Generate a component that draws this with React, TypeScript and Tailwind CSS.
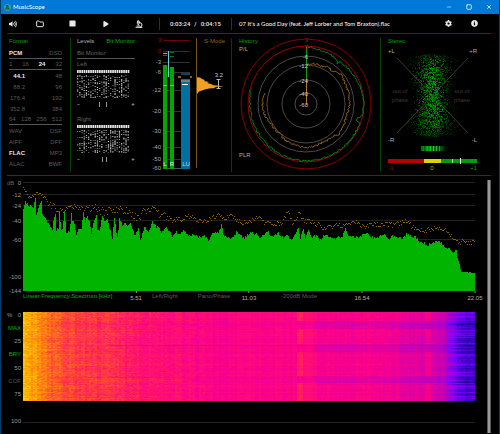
import type { ReactNode } from "react";
import { Folder, Microscope, Minus, Square, X } from "lucide-react";
import { FaCog, FaInfoCircle, FaPlay, FaStop, FaVolumeUp } from "react-icons/fa";

type Point = [number, number];

function createRandom(seed: number) {
  let state = seed;
  return () => {
    state = (state * 1664525 + 1013904223) % 4294967296;
    return state / 4294967296;
  };
}

function interpolate(points: readonly Point[], x: number) {
  if (x <= points[0][0]) return points[0][1];
  for (let i = 1; i < points.length; i++) {
    const [x1, y1] = points[i];
    if (x <= x1) {
      const [x0, y0] = points[i - 1];
      return y0 + ((y1 - y0) * (x - x0)) / (x1 - x0);
    }
  }
  return points[points.length - 1][1];
}

/* ---------- Format ---------- */

const formatRows = [
  { items: ["PCM", "DSD"], active: "PCM", line: true },
  { items: ["1", "16", "24", "32"], active: "24", line: true },
  { items: ["44.1", "48"], active: "44.1", rate: true },
  { items: ["88.2", "96"], rate: true },
  { items: ["176.4", "192"], rate: true },
  { items: ["352.8", "384"], rate: true },
  { items: ["64", "128", "256", "512"], line: true },
  { items: ["WAV", "DSF"] },
  { items: ["AIFF", "DFF"] },
  { items: ["FLAC", "MP3"], active: "FLAC" },
  { items: ["ALAC", "BWF"] },
];

function FormatPanel() {
  return (
    <section className="border-r border-[#004000] pl-0.5 pr-2">
      <h2 className="h-[10px] leading-[7px] text-[#00a000]">Format</h2>
      {formatRows.map((row) => (
        <div
          key={row.items[0]}
          className={`flex h-[11px] items-center justify-between leading-[10px] ${row.line ? "border-b border-[#555]" : ""}`}
        >
          {row.items.map((item, i) => (
            <span
              key={item}
              className={`${item === row.active ? "font-bold text-[#e8e8e8]" : "text-[#5a5a5a]"} ${row.rate && i === 0 ? "w-4 text-right" : ""}`}
            >
              {item}
            </span>
          ))}
        </div>
      ))}
    </section>
  );
}

/* ---------- Bit monitor ---------- */

const BIT_COLUMNS = 24;

function buildBits(seed: number) {
  const random = createRandom(seed);
  const bits: { x: number; y: number; opacity: number }[] = [];
  for (let col = 0; col < BIT_COLUMNS; col++) {
    const density = 0.3 + random() * 0.45;
    for (let y = 5; y < 28; y++) {
      if (random() < density) {
        bits.push({ x: col * 2.2, y, opacity: 0.25 + random() * 0.6 });
      }
    }
  }
  return bits;
}

const channels = [
  { name: "Left", bits: buildBits(11), ticks: [22, 29] },
  { name: "Right", bits: buildBits(47), ticks: [25, 29] },
];

function BitMonitorPanel() {
  return (
    <section className="pl-1.5 pr-[11px]">
      <div className="flex h-[10px] items-start justify-between whitespace-nowrap leading-[7px]">
        <button className="text-[#b0b0b0]">Levels</button>
        <button className="text-[#00b000]">Bit Monitor</button>
      </div>
      <div className="h-[11px] border-b border-[#555] leading-[10px] text-[#666]">Bit Monitor</div>
      {channels.map((channel) => (
        <div key={channel.name} className="h-[55px]">
          <div className="h-[11px] leading-[11px] text-[#666]">{channel.name}</div>
          <svg viewBox="0 0 58 39" className="h-[39px] w-full" preserveAspectRatio="none">
            {Array.from({ length: BIT_COLUMNS }, (_, i) => (
              <rect key={i} x={i * 2.2} y="0" width="1.7" height="3" fill="#e4e4e4" />
            ))}
            {channel.bits.map((bit, i) => (
              <rect key={i} x={bit.x} y={bit.y} width="1.3" height="1" fill="#e0e0e0" opacity={bit.opacity} />
            ))}
            <path d="M0.500 34.500h2M54.500 34.500h3M56 33v3" stroke="#999" strokeWidth="0.7" />
            {channel.ticks.map((x) => (
              <rect key={x} x={x} y="32" width="0.8" height="5" fill="#bbb" />
            ))}
          </svg>
        </div>
      ))}
    </section>
  );
}

/* ---------- Level meters ---------- */

const meterScale = [
  { label: "3", y: 40, color: "#700000" },
  { label: "0", y: 51, color: "#a00000" },
  { label: "-3", y: 62, color: "#333" },
  { label: "-6", y: 72, color: "#333" },
  { label: "-12", y: 90, color: "#333" },
  { label: "-20", y: 111, color: "#333" },
  { label: "-30", y: 131, color: "#333" },
  { label: "-40", y: 147, color: "#333" },
  { label: "-50", y: 159, color: "#333" },
  { label: "-60", y: 168, color: "#555" },
];

function MeterPanel() {
  return (
    <section className="flex border-r border-[#004000]">
      <svg viewBox="146 38 46 134" className="h-[134px] w-[46px] shrink-0" role="img" aria-label="Level meters">
        {meterScale.map(({ label, y, color }) => (
          <g key={label}>
            <rect x="163" y={y} width="27" height="1" fill={color} />
            <text x="161" y={y + 2} textAnchor="end" fill={y < 60 ? "#b00000" : "#aaa"}>
              {label}
            </text>
          </g>
        ))}
        <g shapeRendering="crispEdges">
          <rect x="163" y="65" width="4" height="104" fill="#00a800" />
          <rect x="170" y="67" width="4" height="102" fill="#00a800" />
          <path d="M163 85h4v1h-4zM170 85h4v1h-4zM163 53h4v1h-4z" fill="#00ff30" />
          <path d="M163 55h4v1h-4zM170 52h4v1h-4zM170 56h4v1h-4z" fill="#007a20" />
          <rect x="168" y="51" width="1" height="26" fill="#70c8e0" />
          <rect x="181" y="79" width="9" height="90" fill="#0070a0" />
          <rect x="181" y="73" width="9" height="2" fill="#004868" />
          <rect x="181" y="80" width="9" height="2" fill="#7a8060" />
          <rect x="182" y="84" width="6" height="1" fill="#fff" />
          <path d="M178 76h3v2h-3zM190 76h3v2h-3z" fill="#8a6020" />
        </g>
        <text x="165" y="166" textAnchor="middle" fill="#d8f4d8">L</text>
        <text x="172" y="166" textAnchor="middle" fill="#d8f4d8">R</text>
        <text x="186" y="166" textAnchor="middle" fill="#b8dcec">LU</text>
      </svg>
      <div className="mb-1 ml-1 flex-1 border-l border-[#7a5010]">
        <button className="ml-[7px] block h-[7px] whitespace-nowrap leading-[5px] text-[#9a6418]">S-Mode</button>
        <svg viewBox="197 45 34 54" className="h-[54px] w-[34px]" role="img" aria-label="Loudness distribution">
          <path
            d="M196 77L200 77.500 202 79 205 80 204 81 209 82 207 83 213 84.500 211 85 217 85.500 224 86.500 214 87 216 88 209 88.500 205 89.500 202 90.500 199 91.500 197 94z"
            fill="#f0a020"
          />
          <path d="M216.500 79.500h4M216.500 88.500h4M218.500 79.500v9" stroke="#bbb" strokeWidth="1" fill="none" />
          <text x="219" y="77" textAnchor="middle" fill="#ccc">3.2</text>
        </svg>
      </div>
    </section>
  );
}

/* ---------- History ---------- */

const CENTER: Point = [306, 104];

const historyRings = [
  { label: "3", radius: 65, color: "#8a0000" },
  { label: "0", radius: 58, color: "#a00000" },
  { label: "-6", radius: 48, color: "#4a4a4a" },
  { label: "-12", radius: 39, color: "#4a4a4a" },
  { label: "-24", radius: 24, color: "#4a4a4a" },
  { label: "-40", radius: 11, color: "#4a4a4a" },
];

// [angle in degrees clockwise from the top, radius]
const peakTrace: Point[] = [
  [0, 57], [12, 56], [28, 55], [36, 53], [37, 50], [39, 54], [50, 55], [56, 55], [70, 57],
  [90, 58], [103, 57], [105, 54], [108, 53], [109, 57], [140, 57], [180, 57], [225, 56], [270, 56], [286, 57],
];
const loudnessTrace: Point[] = [
  [0, 39], [10, 41], [22, 41], [30, 43], [38, 42], [50, 46], [62, 44], [80, 44], [95, 43],
  [106, 42], [120, 43], [133, 45], [140, 42], [160, 42], [182, 44], [192, 42], [208, 42], [220, 40],
  [238, 40], [250, 42], [268, 44], [286, 43],
];

function tracePath(points: Point[], jitter: number, seed: number) {
  const random = createRandom(seed);
  let d = "";
  for (let angle = 0; angle <= 286; angle += 1.5) {
    const r = interpolate(points, angle) + (random() - 0.5) * jitter;
    const rad = (angle * Math.PI) / 180;
    const x = CENTER[0] + r * Math.sin(rad);
    const y = CENTER[1] - r * Math.cos(rad);
    d += `${d ? "L" : "M"}${x.toFixed(1)} ${y.toFixed(1)}`;
  }
  return d;
}

const peakPath = tracePath(peakTrace, 1.8, 5);
const loudnessPath = tracePath(loudnessTrace, 2, 9);

function HistoryPanel() {
  return (
    <section className="border-r border-[#004000]">
      <svg viewBox="232 38 148 134" className="h-[134px] w-full" role="img" aria-label="History">
        {historyRings.map(({ label, radius, color }) => (
          <circle key={label} cx={CENTER[0]} cy={CENTER[1]} r={radius} fill="none" stroke={color} strokeWidth="1" />
        ))}
        <path d={peakPath} fill="none" stroke="#008c14" strokeWidth="0.9" />
        <path d={loudnessPath} fill="none" stroke="#a06c18" strokeWidth="0.9" />
        <rect x="306" y="47" width="1" height="32" fill="#00a010" />
        <rect x="306" y="79" width="1" height="26" fill="#b07820" />
        {historyRings.map(({ label, radius }) => (
          <text
            key={label}
            x="308"
            y={CENTER[1] - radius + 3}
            textAnchor="end"
            fill={radius > 50 ? "#d00000" : "#ccc"}
          >
            {label}
          </text>
        ))}
        <text x="308" y="107" textAnchor="end" fill="#ccc">-60</text>
        <text x="239" y="43" fill="#00a000">History</text>
        <text x="239" y="51" fill="#aaa">P/L</text>
        <text x="239" y="157" fill="#aaa">PLR</text>
      </svg>
    </section>
  );
}

/* ---------- Stereo ---------- */

function buildScatter() {
  const random = createRandom(77);
  const dots: { x: number; y: number; opacity: number }[] = [];
  for (let i = 0; i < 2400; i++) {
    const spread = (random() + random() + random()) / 1.5 - 1;
    const v = random() * 2 - 1;
    const width = 21 + 13 * Math.abs(v);
    const x = 432 + spread * width;
    const y = 95 + v * 41 * Math.sqrt(1 - (spread * spread) / 3);
    const edge = 1 - Math.abs(spread) * 0.7 - Math.max(0, Math.abs(v) - 0.65) * 1.6;
    dots.push({ x: Math.round(x), y: Math.round(y), opacity: Math.max(0.15, edge * (0.15 + random() * 0.5)) });
  }
  return dots;
}

const scatter = buildScatter();
const correlationBars = [0.5, 0.9, 0.4, 1, 0.8, 1, 0.9, 0.6, 1, 0.7, 0.9, 0.4, 0.8, 0.5, 0.3, 0.2];

function StereoPanel() {
  return (
    <section>
      <svg viewBox="381 38 110 134" className="h-[134px] w-full" role="img" aria-label="Stereo">
        <g shapeRendering="crispEdges" fill="#00c400">
          {scatter.map((dot, i) => (
            <rect key={i} x={dot.x} y={dot.y} width="1" height="1" opacity={dot.opacity} />
          ))}
        </g>
        <path d="M397 58L468 133M468 58L397 133" stroke="#484848" strokeWidth="0.8" />
        <text x="388" y="43" fill="#00a000">Stereo</text>
        <g fill="#b0b0b0">
          <text x="388" y="53">+L</text>
          <text x="477" y="53" textAnchor="end">+R</text>
          <text x="388" y="142">-R</text>
          <text x="477" y="142" textAnchor="end">-L</text>
        </g>
        <g fill="#3a3a3a" textAnchor="middle">
          <text x="400" y="93">out of</text>
          <text x="400" y="102">phase</text>
          <text x="462" y="93">out of</text>
          <text x="462" y="102">phase</text>
        </g>
        {correlationBars.map((opacity, i) => (
          <rect key={i} x={421 + i * 1.5} y="146" width="1.2" height="5" fill="#00e020" opacity={opacity} />
        ))}
        <g shapeRendering="crispEdges">
          <rect x="388" y="159" width="36" height="4" fill="#b40000" />
          <rect x="424" y="159" width="17" height="4" fill="#dcd400" />
          <rect x="441" y="159" width="36" height="4" fill="#009c10" />
          <rect x="452" y="159" width="1" height="4" fill="#b0e8b0" />
          <rect x="460" y="158" width="1" height="6" fill="#fff" />
        </g>
        <text x="388" y="170" fill="#b00000">-1</text>
        <text x="432" y="170" textAnchor="middle" fill="#b0b000">0</text>
        <text x="477" y="170" textAnchor="end" fill="#00a000">+1</text>
      </svg>
    </section>
  );
}

/* ---------- Spectrum ---------- */

const PLOT_WIDTH = 452;
const PLOT_HEIGHT = 112;

const spectrumLevels: Point[] = [
  [0, 31], [2, 23], [6, 27], [10, 28], [12, 19], [13, 36], [15, 29], [18, 23], [19, 34], [22, 38], [24, 44], [26, 46],
  [29, 51], [30, 43], [32, 35], [33, 51], [35, 49], [36, 34], [38, 51], [39, 51], [41, 34], [43, 53], [46, 53], [48, 34],
  [49, 41], [51, 46], [53, 55], [55, 49], [58, 51], [60, 34], [62, 43], [64, 37], [66, 43], [68, 56], [70, 44], [73, 36],
  [74, 51], [76, 53], [79, 37], [81, 43], [83, 41], [84, 39], [86, 49], [89, 59], [91, 39], [94, 59], [96, 40], [99, 46],
  [102, 43], [104, 47], [107, 43], [109, 51], [112, 56], [115, 50], [117, 61], [121, 48], [125, 53], [129, 43], [133, 48],
  [136, 49], [138, 54], [143, 47], [146, 53], [149, 58], [152, 53], [157, 54], [161, 51], [165, 56], [169, 56], [173, 56],
  [177, 59], [181, 56], [185, 62], [189, 53], [195, 54], [198, 46], [200, 55], [205, 59], [209, 58], [213, 53], [217, 56],
  [221, 59], [227, 54], [234, 56], [237, 59], [244, 52], [248, 58], [255, 54], [260, 59], [263, 55], [268, 62], [272, 55],
  [275, 49], [277, 59], [280, 49], [282, 59], [285, 52], [288, 59], [293, 56], [296, 62], [300, 57], [305, 57], [310, 61],
  [314, 58], [319, 58], [322, 49], [325, 56], [330, 58], [334, 59], [339, 56], [344, 53], [347, 58], [353, 59], [357, 56],
  [362, 55], [365, 61], [369, 56], [374, 59], [379, 59], [384, 55], [389, 58], [393, 59], [396, 64], [400, 64], [404, 66],
  [409, 63], [417, 63], [422, 68], [427, 71], [430, 74], [433, 71], [434, 78], [438, 93], [444, 93], [452, 94],
];

const maximumLevels: Point[] = [
  [1, 9], [5, 17], [9, 17], [13, 13], [19, 16], [25, 23], [34, 29], [44, 29], [51, 26], [59, 31], [72, 27], [80, 33],
  [94, 29], [104, 32], [110, 38], [117, 37], [120, 29], [124, 33], [131, 29], [137, 36], [147, 39], [152, 41], [160, 39],
  [165, 36], [174, 41], [179, 43], [187, 39], [194, 36], [202, 40], [208, 34], [212, 41], [220, 43], [227, 42], [235, 37],
  [239, 42], [250, 45], [260, 42], [264, 33], [266, 36], [270, 46], [276, 33], [280, 41], [290, 43], [302, 49],
  [314, 46], [324, 46], [334, 42], [340, 48], [350, 45], [364, 45], [370, 46], [382, 41], [390, 48], [400, 52],
  [410, 49], [420, 49], [427, 56], [434, 62], [442, 63], [452, 63],
];

function buildSpectrum() {
  const random = createRandom(31);
  let area = `M0 ${PLOT_HEIGHT}`;
  let dots = "";
  for (let x = 0; x < PLOT_WIDTH; x++) {
    const jitter = x > 435 ? 1 : 3;
    const y = Math.round(interpolate(spectrumLevels, x) + (random() - 0.5) * jitter);
    area += `V${y}H${x + 1}`;
    const spread = x < 25 ? 3 : x < 150 ? 8 : 5;
    const top = Math.round(interpolate(maximumLevels, x) + (random() - 0.5) * spread);
    dots += `M${x} ${top}h1v1h-1z`;
  }
  return { area: `${area}V${PLOT_HEIGHT}z`, dots };
}

const spectrum = buildSpectrum();

const spectrumScale = [
  { label: "0", y: 3 },
  { label: "-12", y: 15 },
  { label: "-24", y: 26 },
  { label: "-40", y: 41 },
  { label: "-60", y: 60 },
  { label: "-100", y: 97 },
  { label: "-144", y: 111 },
];

function SpectrumChart() {
  return (
    <div className="flex">
      <svg viewBox="0 0 16 115" className="h-[115px] w-4 shrink-0" aria-hidden="true">
        <text x="0" y="6" fill="#666">dB</text>
        {spectrumScale.map(({ label, y }) => (
          <text key={label} x="14" y={y + 3} textAnchor="end" fill="#999">
            {label}
          </text>
        ))}
      </svg>
      <div className="flex-1">
        <svg
          viewBox="0 0 452 112"
          preserveAspectRatio="none"
          className="h-[112px] w-full"
          shapeRendering="crispEdges"
          role="img"
          aria-label="Linear frequency spectrum"
        >
          {spectrumScale.slice(0, 5).map(({ label, y }) => (
            <rect key={label} x="0" y={y} width="452" height="1" fill="#222" />
          ))}
          <path d={spectrum.area} fill="#00b400" />
          <path d={spectrum.dots} fill="#8c5c08" />
        </svg>
        <div className="grid h-[21px] grid-cols-4 whitespace-nowrap leading-[11px]">
          <FrequencyCell tick="5.51">
            <button className="text-[#00b000]">Linear Frequency Spectrum [kHz]</button>
          </FrequencyCell>
          <FrequencyCell tick="11.03">
            <button className="ml-4 text-[#5a5a5a]">Left/Right</button>
            <button className="ml-5 text-[#5a5a5a]">Pano/Phase</button>
          </FrequencyCell>
          <FrequencyCell tick="16.54">
            <button className="ml-8 text-[#5a5a5a]">-200dB Mode</button>
          </FrequencyCell>
          <FrequencyCell tick="22.05" />
        </div>
      </div>
    </div>
  );
}

function FrequencyCell({ tick, children }: { tick: string; children?: ReactNode }) {
  return (
    <div className="flex items-start">
      {children}
      <div className="ml-auto flex translate-x-1/2 flex-col items-center">
        <span className="h-0.5 w-px bg-[#999]" />
        <span className="text-[#b0b0b0]">{tick}</span>
      </div>
    </div>
  );
}

/* ---------- Spectrogram ---------- */

const MAP_HEIGHT = 89;
const STEPS = 40;

const palette: { at: number; rgb: [number, number, number] }[] = [
  { at: 0, rgb: [16, 0, 90] },
  { at: 0.12, rgb: [50, 0, 190] },
  { at: 0.25, rgb: [125, 0, 250] },
  { at: 0.38, rgb: [185, 0, 190] },
  { at: 0.52, rgb: [250, 0, 140] },
  { at: 0.62, rgb: [255, 20, 105] },
  { at: 0.74, rgb: [255, 75, 50] },
  { at: 0.86, rgb: [255, 145, 10] },
  { at: 1, rgb: [255, 220, 0] },
];

const mapLevels: Point[] = [
  [0, 0.96], [4, 0.92], [14, 0.87], [24, 0.79], [45, 0.72], [80, 0.68], [110, 0.63], [150, 0.58], [200, 0.53],
  [225, 0.55], [290, 0.53], [360, 0.52], [385, 0.48], [405, 0.46], [417, 0.43], [425, 0.33], [431, 0.25], [438, 0.18], [452, 0.17],
];

const darkBands: Point[] = [[9, 17], [32, 40], [64, 71]];

function paletteColor(level: number) {
  const channel = (i: number) =>
    Math.round(interpolate(palette.map((stop): Point => [stop.at, stop.rgb[i]]), level));
  return `rgb(${channel(0)} ${channel(1)} ${channel(2)})`;
}

function buildSpectrogram() {
  const random = createRandom(123);
  const columnNoise = Array.from({ length: PLOT_WIDTH }, () => random() - 0.5);
  const paths: string[] = Array.from({ length: STEPS + 1 }, () => "");
  for (let y = 0; y < MAP_HEIGHT; y++) {
    const rowNoise = random() - 0.5;
    const inBand = darkBands.some(([from, to]) => y >= from && y < to);
    for (let x = 0; x < PLOT_WIDTH; x += 2) {
      let level = interpolate(mapLevels, x);
      const noise = x > 180 ? 0.035 : 0.085;
      level += columnNoise[x] * (x > 180 ? 0.035 : 0.06) + (random() - 0.5) * noise;
      level += rowNoise * (x > 425 ? 0.12 : 0.04);
      if (inBand) level -= x > 290 ? 0.06 : x > 30 ? 0.02 : 0;
      else if (x >= 274 && x < 280) level += 0.11;
      else if (x >= 280 && x < 294) level += 0.04;
      else if (x >= 402 && x < 408) level += 0.05;
      if (y === 33 && x > 85) level -= 0.09;
      if (y >= 66 && y < 71 && x > 60 && x < 160) level += 0.04;
      const step = Math.round(Math.min(1, Math.max(0, level)) * STEPS);
      paths[step] += `M${x} ${y}h2v1h-2z`;
    }
  }
  return paths.map((d, i) => ({ d, fill: paletteColor(i / STEPS) })).filter((path) => path.d);
}

const spectrogram = buildSpectrogram();

function SpectrogramChart() {
  return (
    <div className="flex">
      <div className="w-4 shrink-0 pr-0.5 text-[#999]">
        <div className="flex h-[86px] flex-col items-end justify-between leading-[7px]">
          <div className="flex w-full justify-between">
            <span>%</span>
            <span>0</span>
          </div>
          <button className="text-[#00b000]">MAX</button>
          <span>25</span>
          <button className="text-[#00b000]">BRY</button>
          <span>50</span>
          <button className="text-[#555]">COF</button>
          <span>75</span>
        </div>
        <div className="pt-5 text-right leading-[7px]">100</div>
      </div>
      <div className="flex-1 pb-[10px]">
        <svg
          viewBox="0 0 452 89"
          preserveAspectRatio="none"
          className="h-[89px] w-full"
          shapeRendering="crispEdges"
          role="img"
          aria-label="Spectrogram"
        >
          {spectrogram.map((path) => (
            <path key={path.fill} d={path.d} fill={path.fill} />
          ))}
        </svg>
        <div className="h-[22px] border-b border-[#222]" />
      </div>
    </div>
  );
}

/* ---------- Window ---------- */

function TitleBar() {
  return (
    <header className="flex h-[14px] items-center bg-[#0078d7] pl-[3px] pr-[7px] text-white">
      <svg viewBox="0 0 14 14" className="h-[7px] w-[7px]" aria-hidden="true">
        <circle cx="7" cy="7" r="7" fill="#2fa58c" />
        <path d="M3 11L6 6 5 3 8 3 8 7 11 11M5 10H9" fill="none" stroke="#0c3040" strokeWidth="1.6" />
      </svg>
      <h1 className="ml-0.5 font-[Lato,sans-serif]">MusicScope</h1>
      <div className="ml-auto flex gap-[14px]">
        <button aria-label="Minimize"><Minus size={6} strokeWidth={2} /></button>
        <button aria-label="Maximize"><Square size={6} strokeWidth={3} /></button>
        <button aria-label="Close"><X size={6} strokeWidth={3} /></button>
      </div>
    </header>
  );
}

function ToolButton({ label, children }: { label: string; children: ReactNode }) {
  return (
    <button aria-label={label} className="flex w-[33px] justify-center">
      {children}
    </button>
  );
}

function Toolbar() {
  return (
    <div className="flex h-5 items-center border-b border-[#004d00] text-[#e8e8e8]">
      <div className="flex w-[152px] items-center">
        <button aria-label="Volume" className="w-4 pl-0.5"><FaVolumeUp size={8} /></button>
        <ToolButton label="Open folder"><Folder size={8} strokeWidth={3} /></ToolButton>
        <ToolButton label="Stop"><FaStop size={7} /></ToolButton>
        <ToolButton label="Play"><FaPlay size={6} /></ToolButton>
        <ToolButton label="Analyze"><Microscope size={8} strokeWidth={3} /></ToolButton>
      </div>
      <div className="flex h-3 w-[73px] items-center justify-center gap-1 border-x border-[#004d00] font-[Roboto,sans-serif] font-medium">
        <span>0:03:24</span>
        <span>/</span>
        <span>0:04:15</span>
      </div>
      <div className="ml-[7px] whitespace-nowrap font-[Lato,sans-serif] text-white">
        07 It's a Good Day (feat. Jeff Lorber and Tom Braxton).flac
      </div>
      <div className="ml-auto flex gap-[19px] pr-[13px]">
        <button aria-label="Settings"><FaCog size={7} /></button>
        <button aria-label="About"><FaInfoCircle size={7} /></button>
      </div>
    </div>
  );
}

export default function App() {
  return (
    <div className="border-x border-b border-[#003c6c] bg-black font-['Liberation_Sans',Arial,sans-serif] text-[6px] leading-[8px]">
      <TitleBar />
      <main className="pl-1.5 pr-2">
        <Toolbar />
        <div className="grid grid-cols-[64fr_75fr_86fr_149fr_110fr] border-b border-[#004d00] pb-[3px] pt-1">
          <FormatPanel />
          <BitMonitorPanel />
          <MeterPanel />
          <HistoryPanel />
          <StereoPanel />
        </div>
        <div className="flex pb-1 pt-[3px]">
          <div className="min-w-0 flex-1">
            <SpectrumChart />
            <SpectrogramChart />
          </div>
          <div className="ml-3 mt-px w-1 border-x border-[#555] bg-[#999]" />
        </div>
      </main>
    </div>
  );
}
